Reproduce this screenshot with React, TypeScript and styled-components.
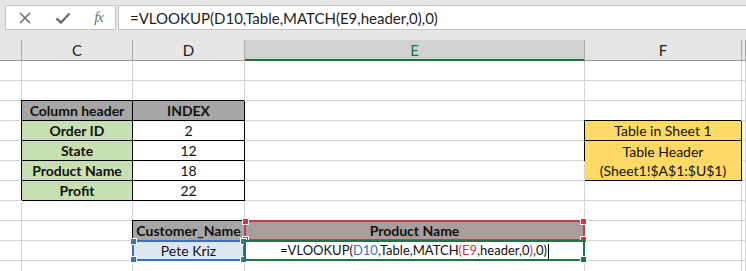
import React from 'react';
import styled, { createGlobalStyle, css } from 'styled-components';

const GlobalStyle = createGlobalStyle`
  html, body { margin: 0; padding: 0; background: #ffffff; }
  body { font-family: Lato, "Liberation Sans", sans-serif; }
`;

const COLS = '22px 111px 112px 340px 157px 1fr';
const CELL_FONT = 'Lato, "Liberation Sans", sans-serif';

const Page = styled.div`
  width: 746px;
  height: 271px;
  overflow: hidden;
  background: #ffffff;
`;

const FormulaBar = styled.div`
  display: flex;
  gap: 2px;
  padding: 5px 0 10px 5px;
  height: 25px;
  background: #e6e6e6;
`;

const IconBox = styled.div`
  width: 111px;
  box-sizing: border-box;
  display: flex;
  align-items: center;
  justify-content: space-between;
  padding: 0 12px 0 12px;
  background: #ffffff;
  border: 1px solid #c6c6c6;
  color: #6f6f6f;
`;

const FxLabel = styled.span`
  font-family: "Liberation Serif", serif;
  font-style: italic;
  font-size: 15px;
  color: #6f6f6f;
  letter-spacing: -1px;
`;

const FormulaInput = styled.div`
  flex: 1;
  box-sizing: border-box;
  display: flex;
  align-items: center;
  padding-left: 11px;
  background: #ffffff;
  border: 1px solid #c6c6c6;
  border-right: none;
  font-family: ${CELL_FONT};
  font-size: 15px;
  color: #1e1e1e;
`;

const HeaderRow = styled.div`
  display: grid;
  grid-template-columns: ${COLS};
  height: 21px;
  background: #e6e6e6;
`;

const ColHead = styled.div<{ $active?: boolean }>`
  box-sizing: border-box;
  display: flex;
  align-items: center;
  justify-content: center;
  border-right: 1px solid #ababab;
  border-bottom: 1px solid #9b9b9b;
  font-family: ${CELL_FONT};
  font-size: 15px;
  color: #222;
  ${(p) =>
    p.$active &&
    css`
      background: #d2d2d2;
      color: #217346;
      border-bottom: 2px solid #217346;
    `}
`;

const Sheet = styled.div`
  display: grid;
  grid-template-columns: ${COLS};
  grid-auto-rows: 20px;
`;

type Tone = 'head' | 'green' | 'yellow' | 'white' | 'rose' | 'blue';
const TONES: Record<Tone, string> = {
  head: '#a6a6a6',
  green: '#c6e0b4',
  yellow: '#ffd966',
  white: '#ffffff',
  rose: '#a89e9d',
  blue: '#dde7f4',
};

const Cell = styled.div<{ $tone?: Tone; $bold?: boolean; $boxed?: boolean; $span?: number; $boxTop?: boolean }>`
  position: relative;
  box-sizing: border-box;
  display: flex;
  flex-direction: column;
  align-items: center;
  justify-content: center;
  border-right: 1px solid #d4d4d4;
  border-bottom: 1px solid #d4d4d4;
  background: ${(p) => (p.$tone ? TONES[p.$tone] : '#ffffff')};
  font-family: ${CELL_FONT};
  font-size: 14px;
  line-height: 19px;
  font-weight: ${(p) => (p.$bold ? 700 : 400)};
  color: #111;
  white-space: nowrap;
  ${(p) => p.$span && css`grid-row: span ${p.$span};`}
  ${(p) =>
    p.$boxed &&
    css`
      border-right-color: #000;
      border-bottom-color: #000;
      box-shadow: -1px -1px 0 0 #000;
    `}
  ${(p) =>
    p.$boxTop &&
    css`
      box-shadow: -1px -1px 0 0 #000;
    `}
`;

const Frame = styled.div<{ $color: string }>`
  position: absolute;
  top: -1px;
  left: -1px;
  right: -1px;
  bottom: -1px;
  border: 2px solid ${(p) => p.$color};
  pointer-events: none;
  z-index: 2;
`;

const Handle = styled.span<{ $color: string; $x: 'l' | 'r'; $y: 't' | 'b' }>`
  position: absolute;
  width: 5px;
  height: 5px;
  background: ${(p) => p.$color};
  border: 1px solid #fff;
  ${(p) => (p.$x === 'l' ? 'left: -4px;' : 'right: -4px;')}
  ${(p) => (p.$y === 't' ? 'top: -4px;' : 'bottom: -4px;')}
`;

const Ref = styled.span<{ $color: string }>`
  color: ${(p) => p.$color};
`;

const Caret = styled.span`
  display: inline-block;
  width: 1px;
  height: 16px;
  margin-left: 1px;
  background: #000;
  vertical-align: middle;
`;

const FormulaText = styled.span`
  font-size: 13px;
  color: #111;
`;

type CellSpec = {
  text?: React.ReactNode;
  tone?: Tone;
  bold?: boolean;
  boxed?: boolean;
  boxTop?: boolean;
  span?: number;
  overlay?: React.ReactNode;
  skip?: boolean;
};

const empty: CellSpec = {};

const Corners = ({ color, all }: { color: string; all: boolean }) => (
  <>
    {all && <Handle $color={color} $x="l" $y="t" />}
    {all && <Handle $color={color} $x="r" $y="t" />}
    {all && <Handle $color={color} $x="l" $y="b" />}
    <Handle $color={color} $x="r" $y="b" />
  </>
);

const BLUE = '#3a6fc4';
const RED = '#c8394a';
const GREEN = '#217346';

const formulaCell = (
  <FormulaText>
    =VLOOKUP(<Ref $color={BLUE}>D10</Ref>,Table,MATCH<Ref $color={RED}>(E9</Ref>,header,0<Ref $color={RED}>)</Ref>,0)
    <Caret />
  </FormulaText>
);

const rows: CellSpec[][] = [
  [empty, empty, empty, empty, empty, empty],
  [empty, empty, empty, empty, empty, empty],
  [empty, { text: 'Column header', tone: 'head', bold: true, boxed: true }, { text: 'INDEX', tone: 'head', bold: true, boxed: true }, empty, empty, empty],
  [empty, { text: 'Order ID', tone: 'green', bold: true, boxed: true }, { text: '2', boxed: true }, empty, { text: 'Table in Sheet 1', tone: 'yellow', boxed: true }, empty],
  [
    empty,
    { text: 'State', tone: 'green', bold: true, boxed: true },
    { text: '12', boxed: true },
    empty,
    {
      text: (
        <>
          <span>Table Header</span>
          <span>(Sheet1!$A$1:$U$1)</span>
        </>
      ),
      tone: 'yellow',
      boxed: true,
      span: 2,
    },
    empty,
  ],
  [empty, { text: 'Product Name', tone: 'green', bold: true, boxed: true }, { text: '18', boxed: true }, empty, { skip: true }, empty],
  [empty, { text: 'Profit', tone: 'green', bold: true, boxed: true }, { text: '22', boxed: true }, empty, empty, empty],
  [empty, empty, empty, empty, empty, empty],
  [
    empty,
    empty,
    { text: 'Customer_Name', tone: 'head', bold: true, boxTop: true },
    {
      text: 'Product Name',
      tone: 'rose',
      bold: true,
      overlay: (
        <Frame $color={RED}>
          <Corners color={RED} all />
        </Frame>
      ),
    },
    empty,
    empty,
  ],
  [
    empty,
    empty,
    {
      text: 'Pete Kriz',
      tone: 'blue',
      overlay: (
        <Frame $color={BLUE}>
          <Corners color={BLUE} all />
        </Frame>
      ),
    },
    {
      text: formulaCell,
      overlay: (
        <Frame $color={GREEN}>
          <Corners color={GREEN} all={false} />
        </Frame>
      ),
    },
    empty,
    empty,
  ],
  [empty, empty, empty, empty, empty, empty],
];

const CancelIcon = () => (
  <svg width="14" height="14" viewBox="0 0 14 14">
    <path d="M2 2 L12 12 M12 2 L2 12" stroke="#6f6f6f" strokeWidth="1.6" fill="none" />
  </svg>
);

const CheckIcon = () => (
  <svg width="16" height="14" viewBox="0 0 16 14">
    <path d="M1.5 7.5 L6 11.5 L14.5 2.5" stroke="#6f6f6f" strokeWidth="2.4" fill="none" />
  </svg>
);

export default function App() {
  return (
    <Page>
      <GlobalStyle />
      <FormulaBar>
        <IconBox>
          <CancelIcon />
          <CheckIcon />
          <FxLabel>fx</FxLabel>
        </IconBox>
        <FormulaInput>=VLOOKUP(D10,Table,MATCH(E9,header,0),0)</FormulaInput>
      </FormulaBar>
      <HeaderRow>
        <ColHead />
        <ColHead>C</ColHead>
        <ColHead>D</ColHead>
        <ColHead $active>E</ColHead>
        <ColHead>F</ColHead>
        <ColHead />
      </HeaderRow>
      <Sheet>
        {rows.map((row, r) =>
          row.map((c, i) =>
            c.skip ? null : (
              <Cell key={`${r}-${i}`} $tone={c.tone} $bold={c.bold} $boxed={c.boxed} $boxTop={c.boxTop} $span={c.span}>
                {c.text}
                {c.overlay}
              </Cell>
            )
          )
        )}
      </Sheet>
    </Page>
  );
}
